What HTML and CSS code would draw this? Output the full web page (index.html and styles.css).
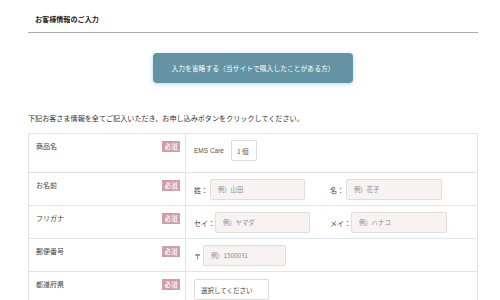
FILE: index.html
```html
<!DOCTYPE html>
<html lang="ja">
<head>
    <meta charset="UTF-8">
    <title>お客様情報のご入力</title>
    <link rel="stylesheet" href="styles.css">
</head>
<body>

    <div class="container">
        <h2 class="section-title">お客様情報のご入力</h2>

        <div class="button-container">
            <a href="#" class="skip-button">入力を省略する（当サイトで購入したことがある方）</a>
        </div>

        <p class="lead">下記お客さま情報を全てご記入いただき、お申し込みボタンをクリックしてください。</p>

        <table class="form-table">
            <tr class="row-first">
                <th><span>商品名</span><em class="req">必須</em></th>
                <td>
                    <div class="field">
                        <span class="item-name">EMS Care</span>
                        <span class="qty">1 個</span>
                    </div>
                </td>
            </tr>
            <tr>
                <th><span>お名前</span><em class="req">必須</em></th>
                <td>
                    <div class="field">
                        <label class="pair"><span>姓：</span><input class="w95" type="text" placeholder="例）山田"></label>
                        <label class="pair"><span>名：</span><input class="w96" type="text" placeholder="例）花子"></label>
                    </div>
                </td>
            </tr>
            <tr>
                <th><span>フリガナ</span><em class="req">必須</em></th>
                <td>
                    <div class="field kana">
                        <label class="pair"><span>セイ：</span><input class="w95" type="text" placeholder="例）ヤマダ"></label>
                        <label class="pair"><span>メイ：</span><input class="w96" type="text" placeholder="例）ハナコ"></label>
                    </div>
                </td>
            </tr>
            <tr>
                <th><span>郵便番号</span><em class="req">必須</em></th>
                <td>
                    <div class="field">
                        <label class="pair zip"><span>〒</span><input class="w83" type="text" placeholder="例）1500031"></label>
                    </div>
                </td>
            </tr>
            <tr>
                <th><span>都道府県</span><em class="req">必須</em></th>
                <td>
                    <div class="field">
                        <span class="select">選択してください</span>
                    </div>
                </td>
            </tr>
        </table>
    </div>

</body>
</html>
```

FILE: styles.css
```css
* {
    margin: 0;
    padding: 0;
    box-sizing: border-box;
}

body {
    font-family: "Noto Sans CJK JP", "Noto Sans", sans-serif;
    background: #fff;
    color: #333;
    overflow: hidden;
}

.container {
    width: 450px;
    margin-left: 28px;
}

.section-title {
    font-size: 7.1px;
    font-weight: 700;
    color: #222;
    padding: 14px 0 8px 7px;
    line-height: 10px;
    border-bottom: 1px solid #aaa;
}

.button-container {
    display: flex;
    justify-content: center;
    margin-top: 20px;
}

.skip-button {
    display: flex;
    align-items: center;
    justify-content: center;
    width: 200px;
    height: 30px;
    font-size: 6.8px;
    color: #fff;
    background: #6393a4;
    border-radius: 4px;
    text-decoration: none;
    box-shadow: 0 1px 4px rgba(120, 170, 200, 0.5);
}

.lead {
    font-size: 7.1px;
    line-height: 10px;
    margin-top: 30px;
    color: #333;
    white-space: nowrap;
}

.form-table {
    width: 450px;
    margin-top: 10px;
    border-collapse: collapse;
    border: 1px solid #dde4ee;
    table-layout: fixed;
}

.form-table tr {
    height: 33px;
}

.form-table tr.row-first {
    height: 39px;
}

.form-table th,
.form-table td {
    border: 1px solid #dde4ee;
    vertical-align: top;
    text-align: left;
}

.form-table th {
    width: 157px;
    padding: 7px 5px 0 7px;
    font-size: 7px;
    font-weight: 400;
    color: #444;
    line-height: 10px;
}

.form-table th span {
    float: left;
}

.req {
    float: right;
    width: 18px;
    height: 11px;
    line-height: 11px;
    background: #d29dab;
    color: #fff;
    font-style: normal;
    font-size: 6.5px;
    font-weight: 700;
    text-align: center;
    font-family: "Noto Serif CJK JP", "Noto Sans CJK JP", serif;
}

.form-table td {
    padding: 6px 8px 0 8px;
}

.field {
    display: flex;
    align-items: center;
    gap: 25px;
    font-size: 6.8px;
    color: #444;
}

.field.kana {
    gap: 20px;
}

.item-name {
    font-family: "Liberation Sans", sans-serif;
    font-size: 6.5px;
    color: #555;
    margin-right: -18px;
}

.qty {
    width: 26px;
    height: 21px;
    border: 1px solid #ddd;
    border-radius: 2px;
    display: flex;
    align-items: center;
    padding-left: 5px;
    font-size: 6.5px;
    color: #555;
}

.pair {
    display: flex;
    align-items: center;
}

.pair span {
    font-size: 7px;
    color: #444;
}

.pair input {
    height: 21px;
    margin-left: 2px;
    border: 1px solid #e3dcdc;
    border-radius: 2px;
    background: #f9f2f2;
    padding-left: 7px;
    font-family: inherit;
    font-size: 6.3px;
    color: #777;
    outline: none;
}

.kana .pair input {
    margin-left: 0;
}

.pair input::placeholder {
    color: #888;
}

.zip input {
    margin-left: 2px;
}

.w95 { width: 95px; }
.w96 { width: 96px; }
.w83 { width: 83px; }

.select {
    display: flex;
    align-items: center;
    width: 75px;
    height: 21px;
    margin-top: 1px;
    border: 1px solid #ddd;
    border-radius: 2px;
    padding-left: 6px;
    font-size: 6.5px;
    color: #444;
    background: #fff;
}
```
